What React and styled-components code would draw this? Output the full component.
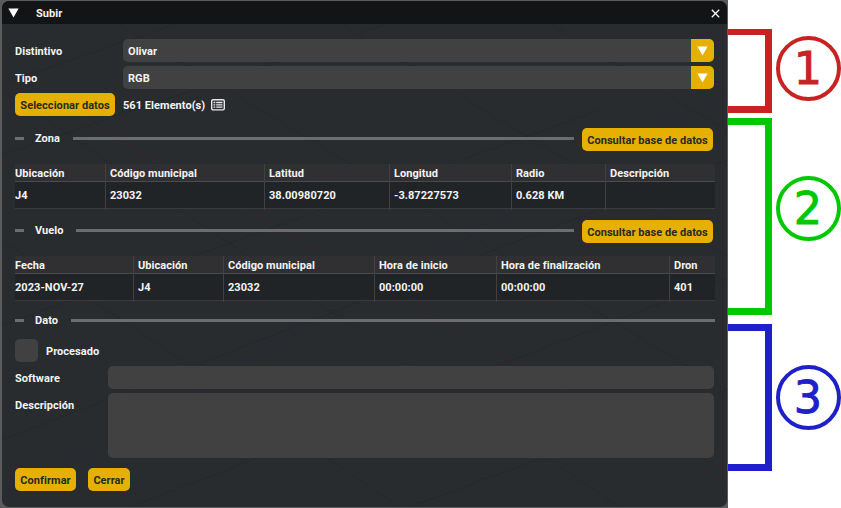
import React from 'react';
import styled, { createGlobalStyle } from 'styled-components';

const Global = createGlobalStyle`
  * { box-sizing: border-box; }
  body { margin: 0; background: #fff; overflow: hidden; }
`;
const Page = styled.div`
  display: flex;
  width: 841px;
  height: 508px;
  overflow: hidden;
  background: #fff;
  font: 700 11px/13px Roboto, sans-serif;
  letter-spacing: 0.05px;
  color: #f4f4f4;
`;
const Viewport = styled.div`
  display: grid;
  width: 728px;
  height: 508px;
  padding: 1px 0 1px 2px;
  background: #5b5b5b;
`;
const Dialog = styled.main`
  display: grid;
  width: 725px;
  height: 506px;
  border-radius: 7px;
  overflow: hidden;
  background: #282c2e;
`;
const Scene = styled.svg`
  grid-area: 1 / 1;
  width: 725px;
  height: 506px;
`;
const Content = styled.div`
  grid-area: 1 / 1;
  display: flex;
  flex-direction: column;
  min-width: 0;
`;
const TitleBar = styled.header`
  display: flex;
  align-items: center;
  height: 23px;
  padding: 1px 7px 0 6px;
  background: #131415;
`;
const Title = styled.span`
  flex: 1;
  margin-left: 17px;
`;
const Body = styled.div`
  display: flex;
  flex-direction: column;
  padding: 15px 0 0 13px;
`;
const Row = styled.div`
  display: flex;
  width: 699px;
  height: ${(p) => p.$height || 23}px;
  margin-bottom: ${(p) => p.$after ?? 4}px;
  gap: ${(p) => p.$gap || 0}px;
  align-items: ${(p) => p.$align || 'center'};
`;
const Label = styled.label`
  width: ${(p) => p.$width}px;
  padding-top: ${(p) => p.$top ?? 2}px;
`;
const Field = styled.div`
  display: flex;
  flex: 1;
  align-items: center;
  justify-content: space-between;
  height: 100%;
  padding-left: 5px;
  border-radius: 5px;
  overflow: hidden;
  background: #414141;
`;
const Value = styled.span`
  padding-top: 2px;
`;
const Drop = styled.button`
  display: grid;
  place-items: center;
  width: 23px;
  height: 23px;
  padding: 0;
  border: 0;
  background: #e5b000;
`;
const Button = styled.button`
  width: ${(p) => p.$width}px;
  height: 23px;
  padding: 2px 0 0;
  border: 0;
  border-radius: 5px;
  background: #e5b000;
  color: #292b22;
  font: inherit;
  letter-spacing: inherit;
  white-space: nowrap;
`;
const Count = styled.span`
  padding: 2px 0 0 8px;
  margin-right: 6px;
`;
const SectionHead = styled.div`
  display: flex;
  align-items: flex-start;
  width: 700px;
  height: 23px;
  padding-right: ${(p) => p.$end}px;
`;
const Dash = styled.i`
  width: 9px;
  height: 3px;
  margin: 9px 11px 0 0;
  background: #6c6c71;
`;
const SectionName = styled.span`
  width: ${(p) => p.$width}px;
  padding-top: 4px;
`;
const Rule = styled.i`
  flex: 1;
  height: 3px;
  margin: 9px ${(p) => p.$end}px 0 0;
  background: #6c6c71;
`;
const Table = styled.div`
  display: grid;
  grid-template-columns: ${(p) => p.$columns};
  width: 700px;
  height: 46px;
  margin: 13px 0 ${(p) => p.$after}px;
  background: linear-gradient(#303032 0 17px, #4b4b4e 17px 18px, #212426 18px 44px, #3b3b3e 44px 45px, transparent 45px);
`;
const Column = styled.div`
  display: flex;
  flex-direction: column;
  padding-left: ${(p) => (p.$first ? 0 : 4)}px;
  border-left: ${(p) => (p.$first ? 0 : 1)}px solid #414144;
`;
const Cell = styled.span`
  height: ${(p) => (p.$head ? 18 : 27)}px;
  padding-top: ${(p) => (p.$head ? 3 : 7)}px;
  white-space: nowrap;
`;
const Check = styled.div`
  width: 23px;
  height: 23px;
  border-radius: 5px;
  background: #414141;
`;
const CheckText = styled.span`
  display: block;
  padding-bottom: 4px;
`;
const Notes = styled.aside`
  display: flex;
  flex-direction: column;
  width: 113px;
`;
const Note = styled.div`
  display: flex;
  align-items: flex-start;
  height: ${(p) => p.$height}px;
  margin-top: ${(p) => p.$before}px;
  color: ${(p) => p.$color};
`;
const Bracket = styled.div`
  width: 44px;
  height: 100%;
  border: 7px solid currentColor;
  border-top-width: ${(p) => p.$cap}px;
  border-left: 0;
`;
const Badge = styled.div`
  flex: none;
  width: 65px;
  height: 65px;
  margin: ${(p) => p.$top}px 0 0 4px;
  padding-right: 1px;
  border: 4px solid currentColor;
  border-radius: 50%;
  font: 400 44.5px/57px 'DejaVu Sans', sans-serif;
  letter-spacing: 0;
  text-align: center;
  -webkit-text-stroke: 0.9px currentColor;
`;

const Arrow = () => (
  <svg width="11" height="10" viewBox="0 0 11 10"><path d="M.4.6h10.2L5.5 9.5Z" fill="#fff" /></svg>
);
const ListIcon = () => (
  <svg width="14" height="12" viewBox="0 0 14 12" fill="none" stroke="#e8e8e8">
    <rect x=".7" y=".7" width="12.6" height="10.2" rx="1.4" strokeWidth="1.4" />
    <path d="M2.5 3.5h1.8M2.5 5.8h1.8M2.5 8.1h1.8M5.2 3.5h6.3M5.2 5.8h6.3M5.2 8.1h6.3" strokeWidth="1.3" />
  </svg>
);

const zone = {
  columns: '90px 159px 125px 122px 94px 1fr',
  cells: [['Ubicación', 'J4'], ['Código municipal', '23032'], ['Latitud', '38.00980720'], ['Longitud', '-3.87227573'], ['Radio', '0.628 KM'], ['Descripción', '']],
};
const flight = {
  columns: '118px 90px 151px 122px 173px 1fr',
  cells: [['Fecha', '2023-NOV-27'], ['Ubicación', 'J4'], ['Código municipal', '23032'], ['Hora de inicio', '00:00:00'], ['Hora de finalización', '00:00:00'], ['Dron', '401']],
};
const notes = [
  { n: 1, color: '#c82222', before: 29, height: 84, top: 7, cap: 6 },
  { n: 2, color: '#00c800', before: 5, height: 197, top: 58, cap: 7 },
  { n: 3, color: '#2020c8', before: 9, height: 147, top: 41, cap: 7 },
];

const Combo = ({ label, value }) => (
  <Row>
    <Label $width={108}>{label}</Label>
    <Field><Value>{value}</Value><Drop aria-label={label}><Arrow /></Drop></Field>
  </Row>
);
const Section = ({ name, width, action }) => (
  <SectionHead $end={action ? 2 : 0}>
    <Dash />
    <SectionName $width={width}>{name}</SectionName>
    <Rule $end={action ? 8 : 0} />
    {action && <Button $width={131}>Consultar base de datos</Button>}
  </SectionHead>
);
const DataTable = ({ data, after }) => (
  <Table $columns={data.columns} $after={after}>
    {data.cells.map(([head, value], i) => (
      <Column key={head} $first={i === 0}>
        <Cell $head>{head}</Cell>
        <Cell>{value}</Cell>
      </Column>
    ))}
  </Table>
);

export default function App() {
  return (
    <Page>
      <Global />
      <Viewport>
        <Dialog>
          <Scene viewBox="2 1 725 506" fill="none" strokeWidth="1">
            <path d="M2 84 245 0M2 155 390 23M2 325 600 110M2 440 727 160M130 507 727 278M410 507 727 390M2 240 400 507M2 90 620 507M118 24 727 390M340 24 727 256M550 24 727 130" stroke="#212526" opacity=".3" />
            <path d="M2 73 727 483" stroke="#4b292d" opacity=".4" />
            <path d="M2 500 727 90" stroke="#29294d" opacity=".35" />
          </Scene>
          <Content>
            <TitleBar>
              <Arrow />
              <Title>Subir</Title>
              <svg width="9" height="9" viewBox="0 0 9 9"><path d="m.8.8 7.4 7.4m0-7.4L.8 8.2" stroke="#fff" strokeWidth="1.3" /></svg>
            </TitleBar>
            <Body>
              <Combo label="Distintivo" value="Olivar" />
              <Combo label="Tipo" value="RGB" />
              <Row $after={12}>
                <Button $width={100}>Seleccionar datos</Button>
                <Count>561 Elemento(s)</Count>
                <ListIcon />
              </Row>
              <Section name="Zona" width={38} action />
              <DataTable data={zone} after={10} />
              <Section name="Vuelo" width={41} action />
              <DataTable data={flight} after={8} />
              <Section name="Dato" width={36} />
              <Row $gap={8} $height={29} $align="flex-end">
                <Check />
                <Label $top={0} $width={80}><CheckText>Procesado</CheckText></Label>
              </Row>
              <Row>
                <Label $width={93}>Software</Label>
                <Field />
              </Row>
              <Row $height={65} $after={10} $align="flex-start">
                <Label $width={93} $top={6}>Descripción</Label>
                <Field />
              </Row>
              <Row $gap={12}>
                <Button $width={61}>Confirmar</Button>
                <Button $width={42}>Cerrar</Button>
              </Row>
            </Body>
          </Content>
        </Dialog>
      </Viewport>
      <Notes>
        {notes.map((note) => (
          <Note key={note.n} $color={note.color} $before={note.before} $height={note.height}>
            <Bracket $cap={note.cap} />
            <Badge $top={note.top}>{note.n}</Badge>
          </Note>
        ))}
      </Notes>
    </Page>
  );
}
